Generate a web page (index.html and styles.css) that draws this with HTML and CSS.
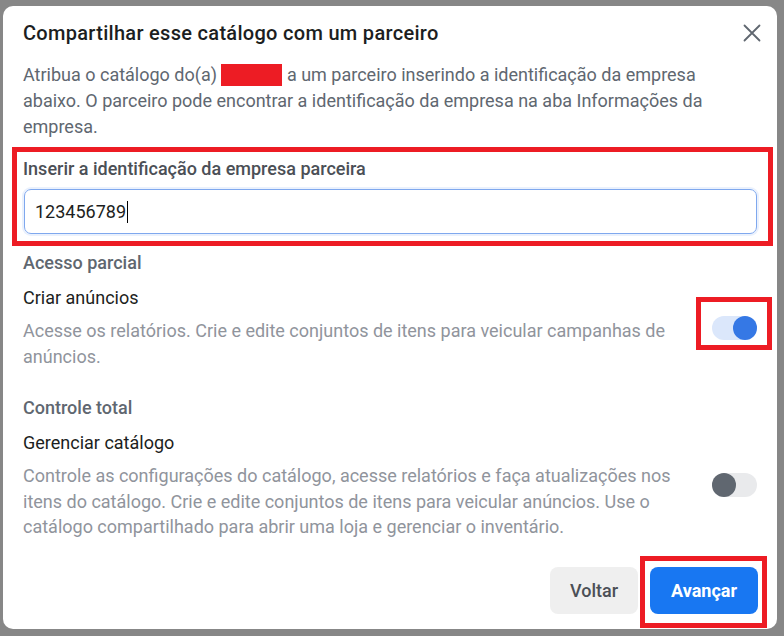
FILE: index.html
```html
<!DOCTYPE html>
<html lang="pt-BR">
<head>
<meta charset="utf-8">
<title>Compartilhar esse catálogo com um parceiro</title>
<link rel="stylesheet" href="styles.css">
</head>
<body>
<div class="dialog">
  <div class="header">
    <h1 class="title">Compartilhar esse catálogo com um parceiro</h1>
    <button class="close" aria-label="Fechar">
      <svg width="18" height="18" viewBox="0 0 18 18"><path d="M1.5 1.5 L16.5 16.5 M16.5 1.5 L1.5 16.5" stroke="#606770" stroke-width="1.8" stroke-linecap="round"/></svg>
    </button>
  </div>
  <div class="body">
    <p class="intro">Atribua o catálogo do(a) <span class="redact"></span> a um parceiro inserindo a identificação da empresa abaixo. O parceiro pode encontrar a identificação da empresa na aba Informações da empresa.</p>

    <div class="field highlight">
      <label class="field-label">Inserir a identificação da empresa parceira</label>
      <div class="input"><span class="value">123456789</span><span class="caret"></span></div>
    </div>

    <div class="group-title first">Acesso parcial</div>
    <div class="option">
      <div class="option-text">
        <div class="option-name">Criar anúncios</div>
        <div class="option-desc">Acesse os relatórios. Crie e edite conjuntos de itens para veicular campanhas de anúncios.</div>
      </div>
      <div class="toggle on marked"><span class="knob"></span></div>
    </div>

    <div class="group-title second">Controle total</div>
    <div class="option">
      <div class="option-text">
        <div class="option-name">Gerenciar catálogo</div>
        <div class="option-desc">Controle as configurações do catálogo, acesse relatórios e faça atualizações nos itens do catálogo. Crie e edite conjuntos de itens para veicular anúncios. Use o catálogo compartilhado para abrir uma loja e gerenciar o inventário.</div>
      </div>
      <div class="toggle off"><span class="knob"></span></div>
    </div>
  </div>
  <div class="footer">
    <button class="btn secondary">Voltar</button>
    <button class="btn primary marked-btn">Avançar</button>
  </div>
</div>
</body>
</html>
```

FILE: styles.css
```css
* { box-sizing: border-box; }

html, body {
  margin: 0;
  padding: 0;
  background: #878787;
  font-family: Roboto, "Liberation Sans", Arial, sans-serif;
}

body {
  width: 784px;
  height: 636px;
  overflow: hidden;
  padding: 6px 7px 7px 3px;
}

.dialog {
  width: 774px;
  height: 623px;
  background: #ffffff;
  border-radius: 10px;
  display: flex;
  flex-direction: column;
}

.header {
  display: flex;
  align-items: center;
  justify-content: space-between;
  padding: 15px 16px 0 20px;
}

.title {
  margin: 0;
  font-size: 20px;
  letter-spacing: 0.3px;
  line-height: 24px;
  font-weight: 500;
  color: #1c1e21;
}

.close {
  border: 0;
  background: transparent;
  padding: 0;
  width: 18px;
  height: 18px;
  display: flex;
}

.body {
  padding: 0 20px;
  flex: 1;
}

.intro {
  margin: 17px 0 0;
  font-size: 18px;
  line-height: 26px;
  color: #606770;
}

.redact {
  display: inline-block;
  width: 61px;
  height: 22px;
  background: #ed1c24;
  vertical-align: -5px;
}

.field {
  margin: 7px -16px 0 -11px;
  padding: 7px 11px 7px 6px;
}

.highlight {
  border: 5px solid #ed1c24;
}

.field-label {
  display: block;
  font-size: 18px;
  line-height: 20px;
  font-weight: 500;
  color: #4b4f56;
}

.input {
  margin: 10px 0 0 1px;
  height: 45px;
  border: 1px solid #7fa8ee;
  border-radius: 7px;
  box-shadow: 0 0 0 2px #eaf1fd;
  display: flex;
  align-items: center;
  padding-left: 10px;
  font-size: 18px;
  color: #1c1e21;
}

.caret {
  display: inline-block;
  width: 1px;
  height: 22px;
  background: #000;
  margin-left: 1px;
}

.group-title {
  font-size: 18px;
  line-height: 20px;
  font-weight: 500;
  color: #606770;
}

.group-title.first { margin-top: 7px; }
.group-title.second { margin-top: 29px; }

.option {
  display: flex;
  align-items: center;
  margin-top: 13px;
}

.option-text {
  flex: 1;
  max-width: 665px;
}

.option-name {
  font-size: 18px;
  line-height: 24px;
  color: #1c1e21;
}

.option-desc {
  margin-top: 8px;
  font-size: 18px;
  line-height: 25.5px;
  color: #90949c;
}

.toggle {
  position: relative;
  width: 45px;
  height: 24px;
  border-radius: 12px;
  margin-left: auto;
  flex-shrink: 0;
}

.toggle .knob {
  position: absolute;
  top: 0;
  width: 24px;
  height: 24px;
  border-radius: 50%;
}

.toggle.on { background: #dbe7fb; }
.toggle.on .knob { right: 0; background: #3578e5; }

.toggle.off { background: #e9eaec; }
.toggle.off .knob { left: 0; background: #606770; }

.toggle.marked::after {
  content: "";
  position: absolute;
  top: -19px;
  bottom: -10px;
  left: -16px;
  right: -15px;
  border: 5px solid #ed1c24;
}

.footer {
  display: flex;
  justify-content: flex-end;
  gap: 12px;
  padding: 0 19px 15px 20px;
}

.btn {
  height: 47px;
  border: 0;
  border-radius: 8px;
  font-family: Roboto, "Liberation Sans", Arial, sans-serif;
  font-size: 18px;
  padding: 0;
}

.btn.secondary {
  width: 88px;
  background: #efefef;
  color: #4b4f56;
  font-weight: 500;
}

.btn.primary {
  width: 108px;
  background: #1877f2;
  color: #ffffff;
  font-weight: 700;
}

.marked-btn { position: relative; }

.marked-btn::after {
  content: "";
  position: absolute;
  top: -11px;
  bottom: -14px;
  left: -10px;
  right: -9px;
  border: 5px solid #ed1c24;
}
```
